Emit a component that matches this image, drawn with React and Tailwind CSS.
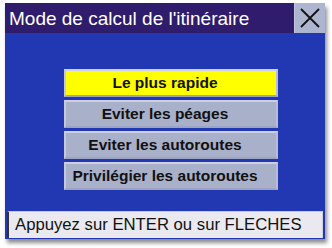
export default function App() {
  const items = ["Le plus rapide", "Eviter les péages", "Eviter les autoroutes", "Privilégier les autoroutes"];
  return (
    <div className="w-[332px] h-[248px] bg-white overflow-hidden pt-[3px] pl-[5px]" style={{ fontFamily: '"Liberation Sans", Arial, sans-serif' }}>
      <div className="w-[320px] h-[236px] flex flex-col bg-[#2238b2] shadow-[2px_4px_4px_rgba(0,0,0,0.45)]">
        <div className="h-[30px] flex bg-[#2f1c6c]">
          <div className="flex-1 flex items-center pl-[4px] text-white text-[19px] leading-none pt-[1px]">Mode de calcul de l'itinéraire</div>
          <div className="w-[31px] h-[30px] bg-[#aeb5d0] border-l border-[#c4c9de] flex items-center justify-center">
            <svg width="22" height="22" viewBox="0 0 22 22">
              <path d="M2 2 L20 20 M20 2 L2 20" stroke="#111" strokeWidth="1.8" fill="none" />
            </svg>
          </div>
        </div>
        <div className="flex-1 flex flex-col pt-[36px] pl-[59px] gap-[3px]">
          {items.map((t, i) => (
            <div
              key={t}
              className={
                "w-[214px] h-[28px] flex items-center justify-center pr-[12px] font-bold text-[15.5px] text-[#111] border-2 border-t-[#cdd0e2] border-l-[#c4c8dc] border-r-[#b8bdd4] border-b-[#9ea4c0] " +
                (i === 0 ? "bg-[#ffff00]" : "bg-[#a9b0c9]")
              }
            >
              {t}
            </div>
          ))}
        </div>
        <div className="mx-[2px] mb-[1px] h-[27px] bg-[#e9e9ef] border-l-2 border-l-[#333] border-t border-t-[#c8c8d4] border-r border-r-[#d0d0da] flex items-center pl-[6px] text-[16.7px] text-[#111] leading-none">
          Appuyez sur ENTER ou sur FLECHES
        </div>
      </div>
    </div>
  );
}
